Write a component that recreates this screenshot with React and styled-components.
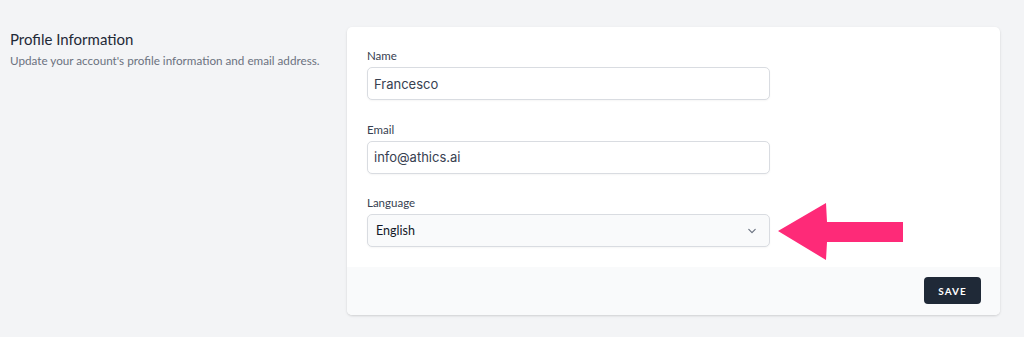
import React from 'react';
import styled, { createGlobalStyle } from 'styled-components';

const GlobalStyle = createGlobalStyle`
    html, body {
        margin: 0;
        padding: 0;
        background: #f3f4f6;
        font-family: "Lato", "Noto Sans", sans-serif;
    }
`

const Page = styled.div`
    width: 1024px;
    height: 337px;
    display: grid;
    grid-template-columns: 337px 653px;
    padding: 27px 0 0 10px;
    box-sizing: border-box;
`

const Intro = styled.div`
    padding-top: 3px;
`

const Title = styled.h3`
    margin: 0;
    font-size: 15px;
    font-weight: 400;
    color: #1f2937;
    line-height: 18px;
`

const Subtitle = styled.p`
    margin: 5px 0 0;
    font-size: 11.7px;
    color: #6b7280;
    line-height: 14px;
`

const Card = styled.div`
    position: relative;
    background: white;
    border-radius: 5px;
    box-shadow: 0 1px 3px rgba(0,0,0,0.1), 0 1px 2px rgba(0,0,0,0.06);
    height: 288px;
    display: flex;
    flex-direction: column;
`

const Fields = styled.div`
    padding: 22px 20px 0 20px;
    height: 240px;
    box-sizing: border-box;
    display: flex;
    flex-direction: column;
    gap: 22.5px;
    border-radius: 5px 5px 0 0;
`

const Field = styled.div`
    display: flex;
    flex-direction: column;
    width: 403px;
`

const Label = styled.label`
    font-size: 11.5px;
    color: #374151;
    line-height: 14px;
    margin-bottom: 4px;
`

const Input = styled.input`
    height: 33px;
    box-sizing: border-box;
    border: 1px solid #d9dce1;
    border-radius: 5px;
    padding: 0 6px;
    font-family: "Inter", "Noto Sans", sans-serif;
    font-size: 13px;
    color: #374151;
    background: white;
    outline: none;
    box-shadow: 0 1px 2px rgba(0,0,0,0.04);
`

const Select = styled.div`
    height: 33px;
    box-sizing: border-box;
    border: 1px solid #d9dce1;
    border-radius: 5px;
    padding: 0 9px 0 8px;
    background: #f9fafb;
    display: flex;
    align-items: center;
    justify-content: space-between;
    font-size: 12.5px;
    font-weight: 400;
    color: #111827;
    box-shadow: 0 1px 2px rgba(0,0,0,0.04);
`

const Footer = styled.div`
    flex: 1;
    background: #f9fafb;
    border-radius: 0 0 5px 5px;
    display: flex;
    align-items: flex-start;
    justify-content: flex-end;
    padding: 10px 19px 0 0;
`

const SaveButton = styled.button`
    width: 57px;
    height: 27px;
    border: none;
    border-radius: 4px;
    background: #1f2937;
    color: white;
    font-family: "Lato", sans-serif;
    font-size: 10px;
    font-weight: 700;
    letter-spacing: 1px;
    cursor: pointer;
`

const Arrow = styled.svg`
    position: absolute;
    left: 430px;
    top: 175px;
`

const Chevron = () => (
    <svg width="16" height="16" viewBox="0 0 20 20" fill="none">
        <path d="M6 8l4 4 4-4" stroke="#6b7280" strokeWidth="1.5" strokeLinecap="round" strokeLinejoin="round" />
    </svg>
)

const App = () => {
    return (
        <Page>
            <GlobalStyle />
            <Intro>
                <Title>Profile Information</Title>
                <Subtitle>Update your account's profile information and email address.</Subtitle>
            </Intro>
            <Card>
                <Fields>
                    <Field>
                        <Label>Name</Label>
                        <Input defaultValue="Francesco" />
                    </Field>
                    <Field>
                        <Label>Email</Label>
                        <Input defaultValue="info@athics.ai" />
                    </Field>
                    <Field>
                        <Label>Language</Label>
                        <Select>
                            <span>English</span>
                            <Chevron />
                        </Select>
                    </Field>
                </Fields>
                <Footer>
                    <SaveButton>SAVE</SaveButton>
                </Footer>
                <Arrow width="130" height="60" viewBox="0 0 130 60">
                    <polygon points="1,29 49,1 50,20 126,20 126,40 50,40 49,58" fill="#fe2a78" />
                </Arrow>
            </Card>
        </Page>
    )
}

export default App
